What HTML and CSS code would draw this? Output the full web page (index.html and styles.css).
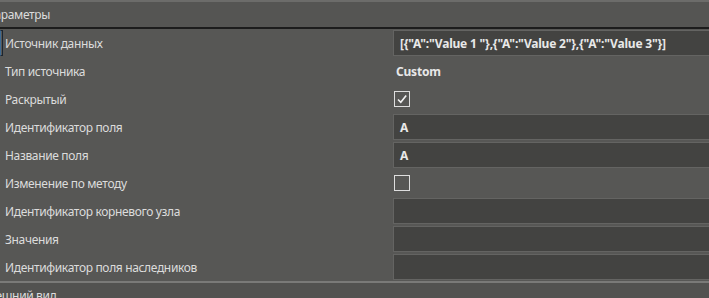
FILE: index.html
```html
<!DOCTYPE html>
<html lang="ru">

<head>
    <meta charset="UTF-8">
    <title>Параметры</title>
    <link rel="stylesheet" href="styles.css">
</head>

<body>
    <div class="panel">
        <div class="section-head"><span>Параметры</span></div>

        <div class="props">
            <div class="row selected">
                <div class="label">Источник данных</div>
                <div class="value"><div class="box">[{"A":"Value 1 "},{"A":"Value 2"},{"A":"Value 3"}]</div></div>
            </div>
            <div class="row">
                <div class="label">Тип источника</div>
                <div class="value"><div class="plain">Custom</div></div>
            </div>
            <div class="row">
                <div class="label">Раскрытый</div>
                <div class="value">
                    <span class="check">
                        <svg width="12" height="12" viewBox="0 0 12 12"><path d="M2 6.5 L4.8 9.3 L10.2 2.6" fill="none" stroke="#f2f2f2" stroke-width="1.6"/></svg>
                    </span>
                </div>
            </div>
            <div class="row">
                <div class="label">Идентификатор поля</div>
                <div class="value"><div class="box">A</div></div>
            </div>
            <div class="row">
                <div class="label">Название поля</div>
                <div class="value"><div class="box">A</div></div>
            </div>
            <div class="row">
                <div class="label">Изменение по методу</div>
                <div class="value"><span class="check"></span></div>
            </div>
            <div class="row">
                <div class="label">Идентификатор корневого узла</div>
                <div class="value"><div class="box"></div></div>
            </div>
            <div class="row">
                <div class="label">Значения</div>
                <div class="value"><div class="box"></div></div>
            </div>
            <div class="row">
                <div class="label">Идентификатор поля наследников</div>
                <div class="value"><div class="box"></div></div>
            </div>
        </div>

        <div class="section-head bottom"><span>Внешний вид</span></div>
    </div>
</body>

</html>
```

FILE: styles.css
```css
body {
    margin: 0;
    overflow: hidden;
    background-color: #575755;
    font-family: 'Noto Sans', 'Open Sans', sans-serif;
    font-size: 12px;
    letter-spacing: -0.35px;
    color: #dcdcdc;
}

.panel {
    width: 730px;
}

.section-head {
    height: 25px;
    border-top: 2px solid #6c6c6a;
    border-bottom: 2px solid #1c1c1c;
    display: flex;
    align-items: center;
    background-color: #555553;
}

.section-head span {
    margin-left: -14px;
}

.section-head.bottom {
    border-top: 2px solid #7a7a78;
    border-bottom: none;
    height: 20px;
    align-items: flex-start;
    background-color: #525250;
    padding-top: 4px;
}

.section-head.bottom span {
    margin-left: -19px;
}

.props {
    display: flex;
    flex-direction: column;
}

.row {
    display: grid;
    grid-template-columns: 393px 1fr;
    height: 28px;
    position: relative;
}

.row.selected::before {
    content: '';
    position: absolute;
    left: 0;
    top: 1px;
    width: 1px;
    height: 24px;
    border: 1px solid #1c2530;
    border-left-color: #3d6a93;
}

.label {
    display: flex;
    align-items: center;
    padding-left: 5px;
}

.value {
    display: flex;
    align-items: center;
}

.box {
    box-sizing: border-box;
    width: 100%;
    height: 26px;
    border: 1px solid #646462;
    background-color: #434341;
    padding-left: 6px;
    display: flex;
    align-items: center;
    font-weight: bold;
    letter-spacing: -0.2px;
    color: #e8e8e8;
}

.plain {
    padding-left: 3px;
    font-weight: bold;
    letter-spacing: -0.2px;
    color: #e8e8e8;
}

.check {
    box-sizing: border-box;
    width: 16px;
    height: 16px;
    margin-left: 1px;
    border: 1px solid #dedede;
    display: flex;
    align-items: center;
    justify-content: center;
}
```
